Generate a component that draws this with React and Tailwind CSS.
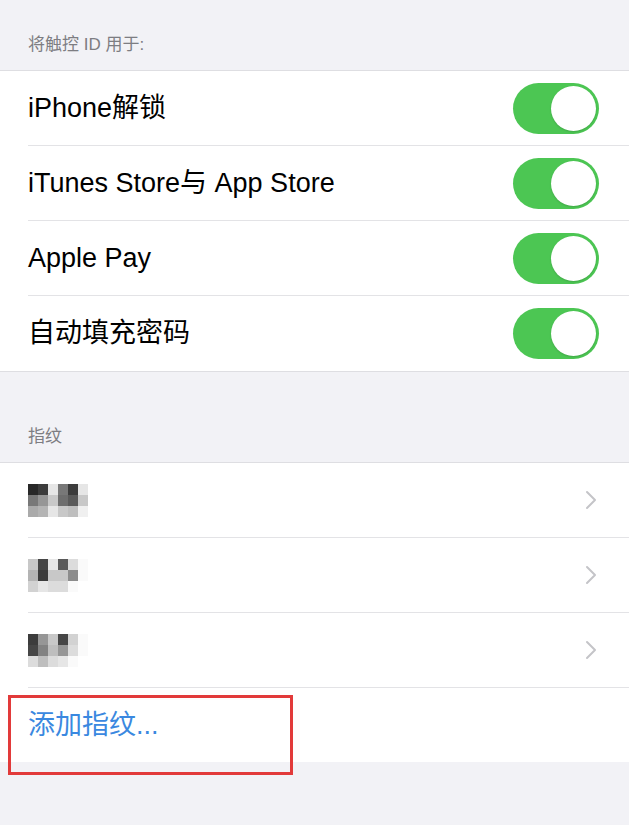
import React from 'react';

const font = { fontFamily: '"Liberation Sans", "Noto Sans CJK SC", sans-serif' };

const Toggle = () => (
  <div className="flex h-[51px] w-[86px] items-center justify-end rounded-full bg-[#4cc653] p-[3px]">
    <div className="h-[45px] w-[45px] rounded-full bg-white shadow-[0_1px_2px_rgba(0,0,0,0.15)]" />
  </div>
);

const Chevron = () => (
  <svg width="12" height="20" viewBox="0 0 12 20" fill="none">
    <path d="M2 2l8 8-8 8" stroke="#c4c4c8" strokeWidth="2" strokeLinecap="round" strokeLinejoin="round" />
  </svg>
);

const Mosaic = ({ cells }) => (
  <div className="grid grid-cols-[repeat(6,10px)] grid-rows-[repeat(3,11px)]">
    {cells.map((c, i) => (
      <div key={i} style={{ backgroundColor: c }} />
    ))}
  </div>
);

const ToggleRow = ({ label, last }) => (
  <div className="flex h-[75px] items-center pl-[28px]">
    <div className={`flex h-full flex-1 items-center pr-[30px] ${last ? '' : 'border-b border-[#e3e3e6]'}`}>
      <span className="flex-1 text-[27px] text-black">{label}</span>
      <Toggle />
    </div>
  </div>
);

const FingerRow = ({ cells }) => (
  <div className="flex h-[75px] items-center pl-[28px]">
    <div className="flex h-full flex-1 items-center border-b border-[#e3e3e6] pr-[32px]">
      <div className="flex-1 blur-[0.6px]">
        <Mosaic cells={cells} />
      </div>
      <Chevron />
    </div>
  </div>
);

const g = (v) => `rgb(${v},${v},${v})`;

export default function App() {
  return (
    <div className="min-h-[825px] w-full bg-[#f2f2f6]" style={font}>
      <div className="flex h-[70px] items-end px-[28px] pb-[13px] text-[17px] text-[#7d7d82]">将触控 ID 用于:</div>
      <div className="border-y border-[#dedee2] bg-white">
        <ToggleRow label="iPhone解锁" />
        <ToggleRow label="iTunes Store与 App Store" />
        <ToggleRow label="Apple Pay" />
        <ToggleRow label="自动填充密码" last />
      </div>
      <div className="flex h-[90px] items-end px-[28px] pb-[13px] text-[17px] text-[#7d7d82]">指纹</div>
      <div className="border-t border-[#dedee2] bg-white">
        <FingerRow cells={[g(40), g(60), g(230), g(120), g(60), g(230), g(120), g(150), g(200), g(110), g(90), g(200), g(170), g(180), g(230), g(200), g(190), g(240)]} />
        <FingerRow cells={[g(200), g(70), g(230), g(90), g(220), g(250), g(180), g(60), g(200), g(200), g(140), g(250), g(210), g(230), g(220), g(220), g(250), g(255)]} />
        <FingerRow cells={[g(60), g(150), g(200), g(70), g(210), g(250), g(70), g(130), g(190), g(150), g(220), g(250), g(220), g(190), g(220), g(230), g(250), g(255)]} />
        <div className="relative flex h-[74px] items-center pl-[28px] text-[27px] text-[#3a88e0]">
          添加指纹...
          <div className="pointer-events-none absolute left-[8px] top-[7px] h-[80px] w-[285px] border-[3px] border-[#e23a3a]" />
        </div>
      </div>
    </div>
  );
}
